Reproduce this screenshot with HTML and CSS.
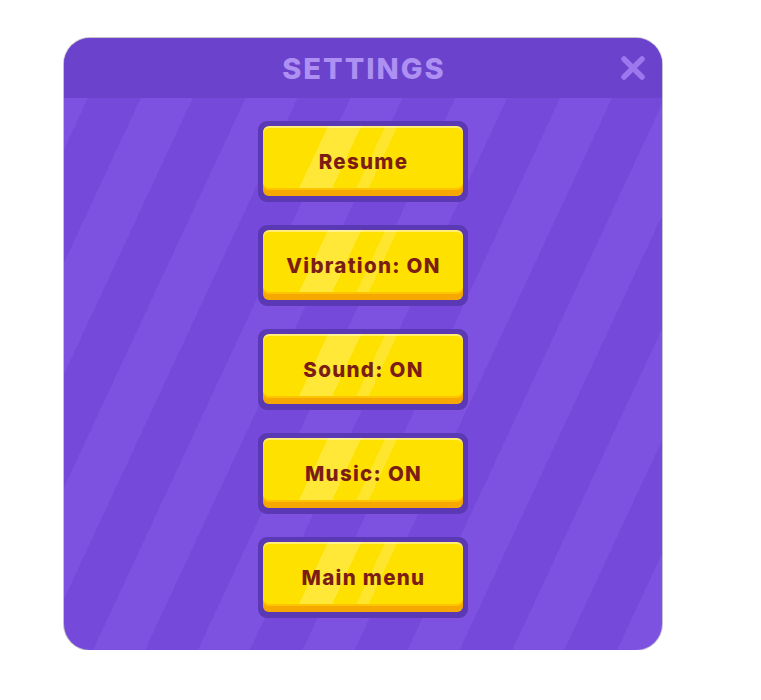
FILE: index.html
```html
<!DOCTYPE html>
<html>
<head>
<meta charset="utf-8">
<link rel="stylesheet" href="styles.css">
</head>
<body>
<div class="panel">
  <div class="header">
    <h1 class="title">SETTINGS</h1>
    <button class="close" aria-label="Close">
      <svg width="26" height="26" viewBox="0 0 26 26"><path d="M4 4 L22 22 M22 4 L4 22" stroke="#9b78ee" stroke-width="5.5" stroke-linecap="round"/></svg>
    </button>
  </div>
  <div class="body">
    <div class="btn-frame"><div class="btn">Resume</div></div>
    <div class="btn-frame"><div class="btn">Vibration: ON</div></div>
    <div class="btn-frame"><div class="btn">Sound: ON</div></div>
    <div class="btn-frame"><div class="btn">Music: ON</div></div>
    <div class="btn-frame"><div class="btn">Main menu</div></div>
  </div>
</div>
</body>
</html>
```
FILE: styles.css
```css
html, body {
  margin: 0;
  padding: 0;
  background: #ffffff;
}
body {
  font-family: "Inter", "Open Sans", sans-serif;
}
.panel {
  margin: 38px 0 0 64px;
  width: 598px;
  height: 612px;
  border-radius: 26px;
  overflow: hidden;
  background-color: #7549d9;
  background-image: repeating-linear-gradient(115deg, #7d52e0 0px, #7d52e0 47px, #7549d9 47px, #7549d9 95px);
  box-shadow: 0 0 0 1px rgba(90, 80, 110, 0.35);
  display: flex;
  flex-direction: column;
}
.header {
  position: relative;
  height: 60px;
  background: #6b42cc;
  display: flex;
  align-items: center;
  justify-content: center;
}
.title {
  margin: 0;
  font-size: 29px;
  font-weight: 800;
  color: #ae8ff2;
  letter-spacing: 2px;
  padding-left: 2px;
}
.close {
  position: absolute;
  right: 16px;
  top: 17px;
  width: 26px;
  height: 26px;
  padding: 0;
  border: 0;
  background: none;
}
.close svg { display: block; }
.body {
  flex: 1;
  display: flex;
  flex-direction: column;
  align-items: center;
  padding-top: 23px;
  gap: 23px;
}
.btn-frame {
  width: 200px;
  height: 70px;
  padding: 5px 5px 6px 5px;
  border-radius: 9px;
  background: #5b38b4;
}
.btn {
  height: 70px;
  border-radius: 6px;
  background-color: #ffe100;
  background-image: linear-gradient(115deg, transparent 59px, rgba(255,255,255,0.22) 59px, rgba(255,255,255,0.22) 89px, transparent 89px, transparent 111px, rgba(255,255,255,0.18) 111px, rgba(255,255,255,0.18) 122px, transparent 122px);
  box-shadow: inset 0 -6px 0 #f6a700, inset 0 -8px 0 #ffc400, inset 0 2px 0 rgba(255,255,255,0.45);
  display: flex;
  align-items: center;
  justify-content: center;
  padding-left: 1px;
  box-sizing: border-box;
  font-size: 20.5px;
  font-weight: 800;
  letter-spacing: 1.3px;
  color: #7b1d12;
}
```
